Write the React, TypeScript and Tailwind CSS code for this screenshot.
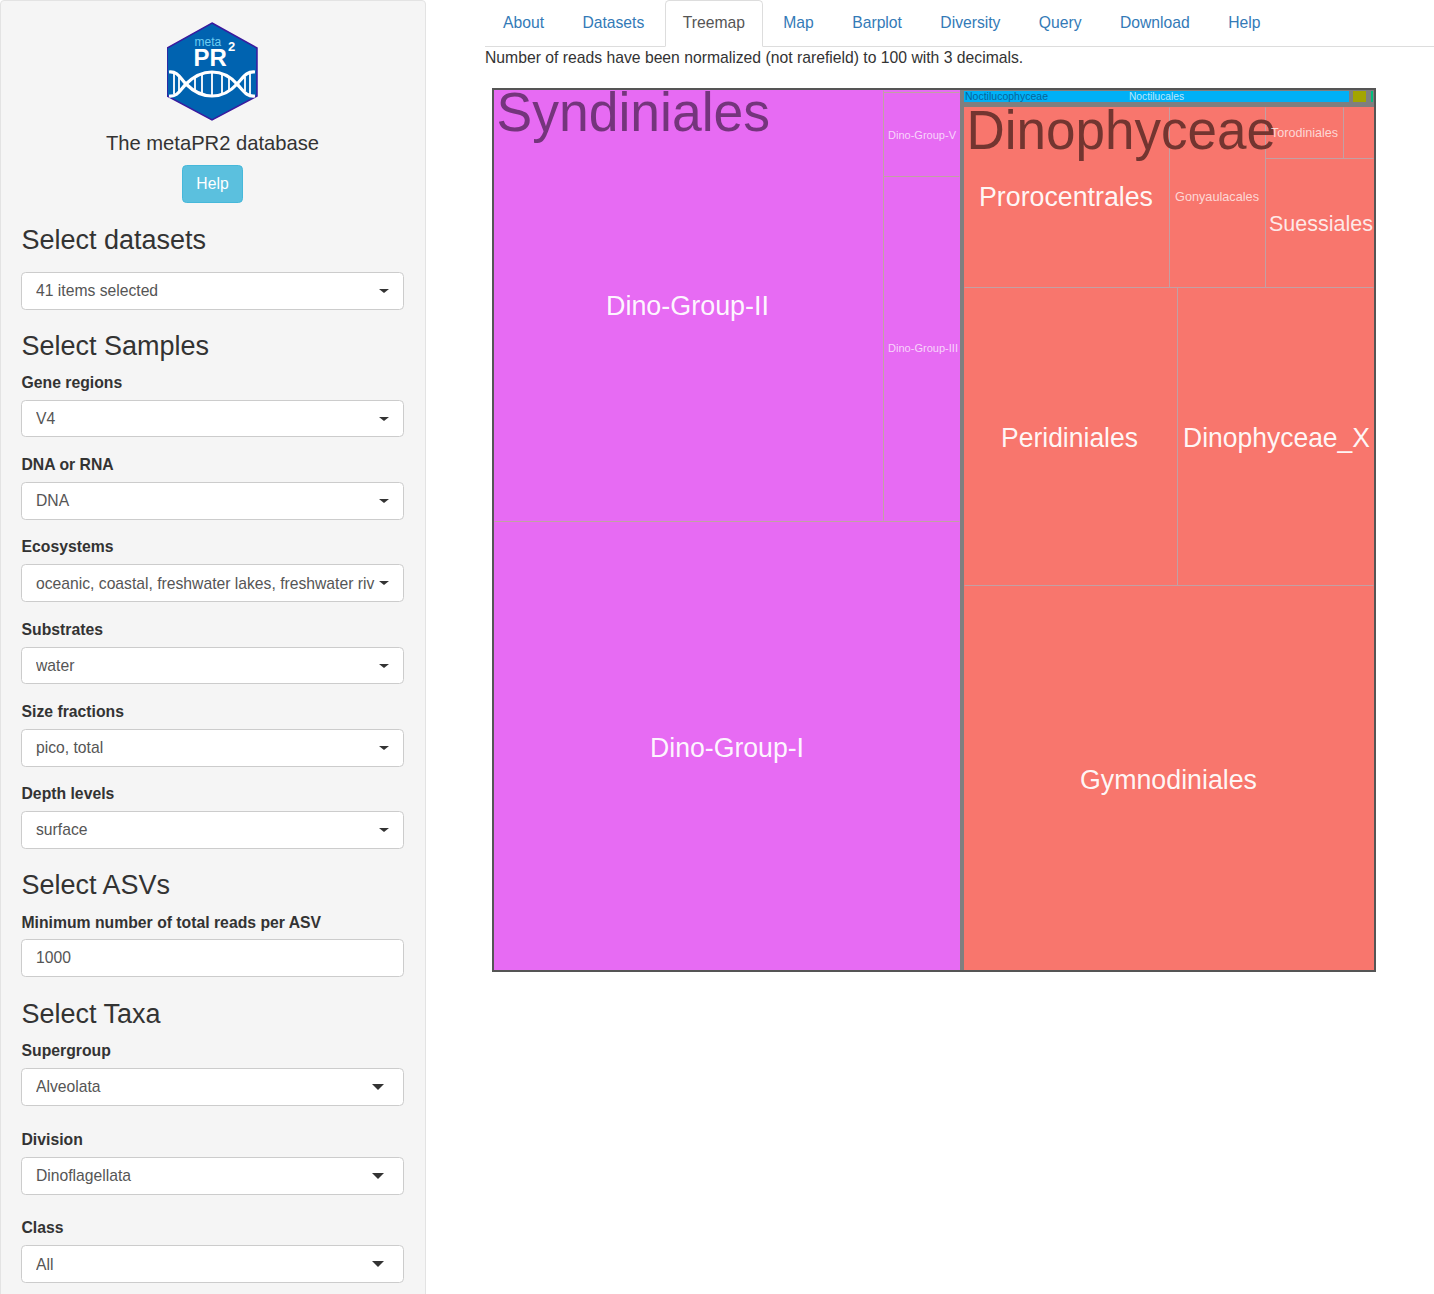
// App.tsx
import React from 'react';

const FONT = "[font-family:'Liberation_Sans',Arial,sans-serif]";

const TABS = ['About', 'Datasets', 'Treemap', 'Map', 'Barplot', 'Diversity', 'Query', 'Download', 'Help'];

const GRID_LINES = [
  'M883 90V520', 'M494 521H959', 'M883 176H959', 'M883 92H959',
  'M964 287H1373', 'M964 585H1373', 'M1169 107V287', 'M1265 107V287',
  'M1265 158H1373', 'M1343 107V158', 'M1177 287V585',
];

interface TreeLabel {
  text: string;
  x: number;
  y: number;
  w: number;
  size: number;
  fill: string;
}

const W = 'rgba(255,255,255,0.95)';
const SOFT = 'rgba(255,255,255,0.72)';

const TREE_LABELS: TreeLabel[] = [
  { text: 'Dino-Group-V', x: 888, y: 139, w: 68, size: 11.5, fill: SOFT },
  { text: 'Dino-Group-III', x: 888, y: 352, w: 70, size: 10.5, fill: SOFT },
  { text: 'Dino-Group-II', x: 606, y: 315, w: 163, size: 27, fill: W },
  { text: 'Dino-Group-I', x: 650, y: 757, w: 154, size: 27, fill: W },
  { text: 'Noctilucophyceae', x: 965, y: 100, w: 83, size: 10.5, fill: '#08659a' },
  { text: 'Noctilucales', x: 1129, y: 100, w: 55, size: 10.5, fill: SOFT },
  { text: 'Prorocentrales', x: 979, y: 206, w: 174, size: 27, fill: W },
  { text: 'Gonyaulacales', x: 1175, y: 200.5, w: 84, size: 13, fill: SOFT },
  { text: 'Suessiales', x: 1269, y: 230.5, w: 104, size: 22, fill: 'rgba(255,255,255,0.85)' },
  { text: 'Peridiniales', x: 1001, y: 447, w: 137, size: 27, fill: W },
  { text: 'Dinophyceae_X', x: 1183, y: 447, w: 187, size: 28, fill: W },
  { text: 'Gymnodiniales', x: 1080, y: 789, w: 177, size: 27, fill: W },
  { text: 'Syndiniales', x: 496.5, y: 131, w: 273.5, size: 55, fill: '#74357c' },
  { text: 'Dinophyceae', x: 966.5, y: 149, w: 309.5, size: 55, fill: '#733530' },
  { text: 'Torodiniales', x: 1271, y: 137, w: 67, size: 13, fill: SOFT },
];

function Logo() {
  return (
    <svg viewBox="167 22 91 100" className="w-[91px] h-[100px] block">
      <polygon points="212,23 257,48 257,96 212,120 167,96 167,48" fill="#0063b0" stroke="#3a1a9e" strokeWidth="1.5" />
      <text x="194.5" y="45.5" fontSize="12" fill="#6ccdf2">meta</text>
      <text x="193.5" y="66" fontSize="24" fontWeight="700" fill="#fff">PR</text>
      <text x="228" y="50.5" fontSize="13" fontWeight="700" fill="#fff">2</text>
      <g fill="none" stroke="#fff">
        <path strokeWidth="3.2" d="M169 72C178 71 180 78 186 84C194 92 202 96 212 96C222 96 230 92 237 84C243 78 246 71 255 72" />
        <path strokeWidth="3.2" d="M169 96C178 97 180 90 186 84C194 76 202 72 212 72C222 72 230 76 237 84C243 90 246 97 255 96" />
        <path strokeWidth="1.8" d="M174 74V94M179 77V91M195 77V91M202 74V94M212 73V95M222 74V94M229 78V90M245 77V91M250 74V94" />
      </g>
    </svg>
  );
}

function Heading({ children, className }: { children: React.ReactNode; className: string }) {
  return <h3 className={`text-[27px] leading-[30px] text-[#333] ${className}`}>{children}</h3>;
}

function Select({ value, bigCaret }: { value: string; bigCaret?: boolean }) {
  return (
    <div className="h-[37.7px] flex items-center bg-white border border-[#ccc] rounded-[4.5px] pl-[14px] pr-[14px] text-[15.7px] text-[#555]">
      <span className="flex-1 whitespace-nowrap overflow-hidden">{value}</span>
      {bigCaret ? (
        <span className="mr-[5px] w-0 h-0 border-x-[6px] border-x-transparent border-t-[6px] border-t-[#333]" />
      ) : (
        <span className="ml-[3px] w-0 h-0 border-x-[5px] border-x-transparent border-t-[4.5px] border-t-[#333]" />
      )}
    </div>
  );
}

function Field({ label, value, bigCaret, className }: { label: string; value: string; bigCaret?: boolean; className: string }) {
  return (
    <div className={className}>
      <div className="h-[22px] pl-[0.5px] leading-[22px] text-[15.75px] font-bold text-[#333] mb-[6px]">{label}</div>
      <Select value={value} bigCaret={bigCaret} />
    </div>
  );
}

function Sidebar() {
  return (
    <aside className="w-[426px] shrink-0 h-[1320px] bg-[#f5f5f5] border border-[#e3e3e3] rounded-[4px] pl-[20px] pr-[21px] pt-[21px]">
      <div className="flex flex-col items-center">
        <Logo />
        <div className="mt-[9px] text-[20.2px] leading-[24px] text-[#333]">The metaPR2 database</div>
        <div className="mt-[10px] w-[61px] h-[38px] flex items-center justify-center rounded-[4.5px] bg-[#5bc0de] border border-[#46b8da] text-white text-[15.7px]">Help</div>
      </div>
      <Heading className="mt-[22px] pl-[0.5px]">Select datasets</Heading>
      <div className="mt-[17px]"><Select value="41 items selected" /></div>
      <Heading className="mt-[21px] pl-[0.5px]">Select Samples</Heading>
      <Field className="mt-[11px]" label="Gene regions" value="V4" />
      <Field className="mt-[16.5px]" label="DNA or RNA" value="DNA" />
      <Field className="mt-[16.9px]" label="Ecosystems" value="oceanic, coastal, freshwater lakes, freshwater riv" />
      <Field className="mt-[16.6px]" label="Substrates" value="water" />
      <Field className="mt-[16.4px]" label="Size fractions" value="pico, total" />
      <Field className="mt-[16.4px]" label="Depth levels" value="surface" />
      <Heading className="mt-[21.5px] pl-[0.5px]">Select ASVs</Heading>
      <div className="mt-[12px] h-[22px] pl-[0.5px] leading-[22px] text-[15.75px] font-bold text-[#333] mb-[5px]">Minimum number of total reads per ASV</div>
      <div className="h-[38px] flex items-center bg-white border border-[#ccc] rounded-[4.5px] px-[14px] text-[15.7px] text-[#555]">1000</div>
      <Heading className="mt-[22px] pl-[0.5px]">Select Taxa</Heading>
      <Field className="mt-[11px]" label="Supergroup" value="Alveolata" bigCaret />
      <Field className="mt-[23.4px]" label="Division" value="Dinoflagellata" bigCaret />
      <Field className="mt-[22.6px]" label="Class" value="All" bigCaret />
    </aside>
  );
}

function Treemap() {
  return (
    <svg viewBox="492 88 884 884" className="w-[884px] h-[884px] block ml-[7px] mt-[19px]">
      <rect x="492" y="88" width="884" height="884" fill="#7f7f7f" />
      <rect x="493" y="89" width="882" height="882" fill="none" stroke="#555" strokeWidth="2" />
      <rect x="494" y="90" width="466" height="880" fill="#e76bf3" />
      <rect x="964" y="91" width="385" height="11" fill="#00b0f6" />
      <rect x="1353" y="91" width="13" height="11" fill="#a3a500" />
      <rect x="1371" y="91" width="2" height="11" fill="#00bf7d" />
      <rect x="964" y="107" width="410" height="863" fill="#f8766d" />
      <g fill="none" stroke="#c2a0a4" strokeWidth="1" transform="translate(0.5 0.5)">
        {GRID_LINES.map(d => <path key={d} d={d} />)}
      </g>
      {TREE_LABELS.map(l => (
        <text key={l.text} x={l.x} y={l.y} fontSize={l.size} fill={l.fill} textLength={l.w} lengthAdjust="spacingAndGlyphs">
          {l.text}
        </text>
      ))}
    </svg>
  );
}

export default function App() {
  return (
    <div className={`h-[1294px] overflow-hidden bg-white flex ${FONT}`}>
      <Sidebar />
      <main className="flex-1 min-w-0 pl-[59px]">
        <nav className="h-[47px] flex gap-[2.4px] border-b border-[#ddd] text-[15.7px]">
          {TABS.map(tab => (
            tab === 'Treemap' ? (
              <span key={tab} className="h-[47px] px-[17px] leading-[43px] bg-white border border-[#ddd] border-b-white rounded-t-[4.5px] text-[#555]">{tab}</span>
            ) : (
              <span key={tab} className="h-[46px] px-[17px] leading-[43px] border border-transparent text-[#337ab7]">{tab}</span>
            )
          ))}
        </nav>
        <p className="text-[15.73px] leading-[21px] text-[#333] whitespace-nowrap">
          Number of reads have been normalized (not rarefield) to 100 with 3 decimals.
        </p>
        <div className="h-[1px]" />
        <Treemap />
      </main>
    </div>
  );
}
